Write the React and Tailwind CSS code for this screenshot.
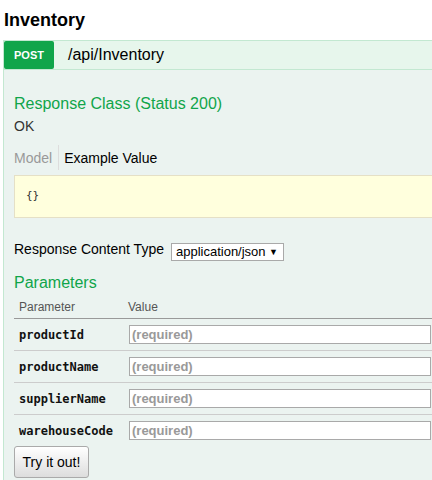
import React from "react";

const params = ["productId", "productName", "supplierName", "warehouseCode"];

export default function App() {
  return (
    <div className="w-[432px] h-[480px] overflow-hidden bg-white font-['Liberation_Sans',Arial,sans-serif] text-[#222]">
      <h2 className="pl-[4px] pt-[9px] h-[40px] text-[18px] leading-[22px] font-bold text-black">
        Inventory
      </h2>
      <div className="ml-[3px] w-[440px] border border-[#c3e8d1]">
        <div className="flex items-center h-[29px] bg-[#e7f6ec] border-b border-[#c3e8d1]">
          <span className="flex items-center justify-center w-[50px] h-[28px] rounded-[2px] bg-[#10a54a] text-white font-bold text-[11px]">
            POST
          </span>
          <span className="ml-[14px] text-[16px] leading-[20px] text-black">/api/Inventory</span>
        </div>
        <div className="bg-[#ebf3f0] pl-[10px] pt-[24px] pb-[40px]">
          <h4 className="text-[16px] leading-[20px] text-[#10a54a]">Response Class (Status 200)</h4>
          <div className="mt-[3px] text-[14px] leading-[18px] text-[#333]">OK</div>
          <div className="mt-[10px] flex h-[25px] items-center text-[14px] leading-[18px]">
            <span className="pr-[6px] h-full flex items-center border-r border-[#ddd] text-[#999]">Model</span>
            <span className="pl-[5px] text-black">Example Value</span>
          </div>
          <div className="mt-[5px] h-[43px] border border-[#e5e0c6] bg-[#ffffdd] flex items-center pl-[11px] font-['DejaVu_Sans_Mono',monospace] text-[11px] text-[#333]">
            {"{}"}
          </div>
          <div className="mt-[22px] flex items-start text-[14px] leading-[18px] text-black">
            <span>Response Content Type</span>
            <div className="ml-[7px] mt-[3px] w-[113px] h-[18px] border border-[#a9a9a9] bg-white flex items-center justify-between pl-[4px] pr-[5px] text-[13px] leading-[16px]">
              <span>application/json</span>
              <span className="text-[9px]">▼</span>
            </div>
          </div>
          <h4 className="mt-[12px] text-[16px] leading-[20px] text-[#10a54a]">Parameters</h4>
          <div className="text-[12px] leading-[16px]">
            <div className="flex pt-[6px] pb-[3px] border-b border-[#999] text-[#555]">
              <span className="w-[110px] pl-[5px]">Parameter</span>
              <span className="pl-[4px]">Value</span>
            </div>
            {params.map((p, i) => (
              <div
                key={p}
                className={
                  "flex items-center py-[6px] " +
                  (i < params.length - 1 ? "border-b border-[#ccc]" : "")
                }
              >
                <span className="w-[115px] pl-[5px] font-['DejaVu_Sans_Mono',monospace] font-bold text-[12px] text-[#111]">
                  {p}
                </span>
                <div className="w-[302px] h-[19px] border border-[#a9a9a9] bg-white pl-[2px] flex items-center text-[13px] leading-[16px] font-bold text-[#999]">
                  (required)
                </div>
              </div>
            ))}
            <button className="w-[75px] h-[32px] border border-[#aaa] rounded-[3px] bg-linear-to-b from-white to-[#ddd] text-[14px] text-black">
              Try it out!
            </button>
          </div>
        </div>
      </div>
    </div>
  );
}
